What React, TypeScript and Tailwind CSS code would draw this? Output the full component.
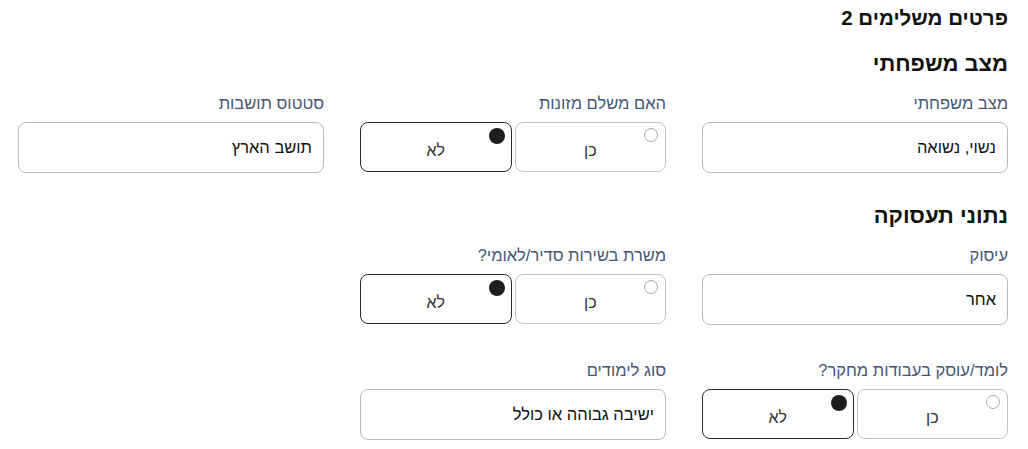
import React from 'react';

// Field label above an input
function Label({ children }: { children: React.ReactNode }) {
  return (
    <div className="text-[16.5px] leading-[20px] text-[#465775] mb-[9px]">{children}</div>
  );
}

function TextField({ label, value }: { label: string; value: string }) {
  return (
    <div>
      <Label>{label}</Label>
      <div className="h-[51px] rounded-[8px] border border-[#b7b7c2] bg-white flex items-center px-[11px] text-[16.5px] text-[#111]">
        {value}
      </div>
    </div>
  );
}

function YesNo({ label, value }: { label: string; value: 'yes' | 'no' }) {
  const options: { key: 'yes' | 'no'; text: string }[] = [
    { key: 'yes', text: 'כן' },
    { key: 'no', text: 'לא' },
  ];
  return (
    <div>
      <Label>{label}</Label>
      <div className="grid grid-cols-2 gap-[3px]">
        {options.map((o) => {
          const selected = o.key === value;
          return (
            <div
              key={o.key}
              className={
                selected
                  ? 'relative h-[50px] rounded-[8px] border border-[#2a2a2a] bg-white flex items-center justify-center pt-[7px] text-[16px] text-[#333]'
                  : 'relative h-[50px] rounded-[8px] border border-[#c4c4cf] bg-white flex items-center justify-center pt-[7px] text-[16px] text-[#333]'
              }
            >
              {selected ? (
                <span className="absolute top-[5px] right-[6px] w-[16px] h-[16px] rounded-full bg-[#1e1e1e]" />
              ) : (
                <span className="absolute top-[5px] right-[7px] w-[14px] h-[14px] rounded-full border border-[#a9a9b3] bg-white" />
              )}
              {o.text}
            </div>
          );
        })}
      </div>
    </div>
  );
}

export default function App() {
  return (
    <div
      dir="rtl"
      className="w-[1028px] h-[449px] bg-white pr-[20px] pl-[18px] pt-[6px] overflow-hidden"
      style={{ fontFamily: '"Liberation Sans", "DejaVu Sans", Arial, sans-serif' }}
    >
      <h1 className="text-[20.5px] leading-[24px] font-bold text-[#111]">פרטים משלימים 2</h1>

      <h2 className="mt-[22px] mb-[17px] text-[22px] leading-[24px] font-bold text-[#111]">מצב משפחתי</h2>
      <div className="grid grid-cols-3 gap-x-[36px]">
        <TextField label="מצב משפחתי" value="נשוי, נשואה" />
        <YesNo label="האם משלם מזונות" value="no" />
        <TextField label="סטטוס תושבות" value="תושב הארץ" />
      </div>

      <h2 className="mt-[31px] mb-[17px] text-[22px] leading-[24px] font-bold text-[#111]">נתוני תעסוקה</h2>
      <div className="grid grid-cols-3 gap-x-[36px] gap-y-[35px]">
        <TextField label="עיסוק" value="אחר" />
        <YesNo label="משרת בשירות סדיר/לאומי?" value="no" />
        <div />
        <YesNo label="לומד/עוסק בעבודות מחקר?" value="no" />
        <TextField label="סוג לימודים" value="ישיבה גבוהה או כולל" />
      </div>
    </div>
  );
}
